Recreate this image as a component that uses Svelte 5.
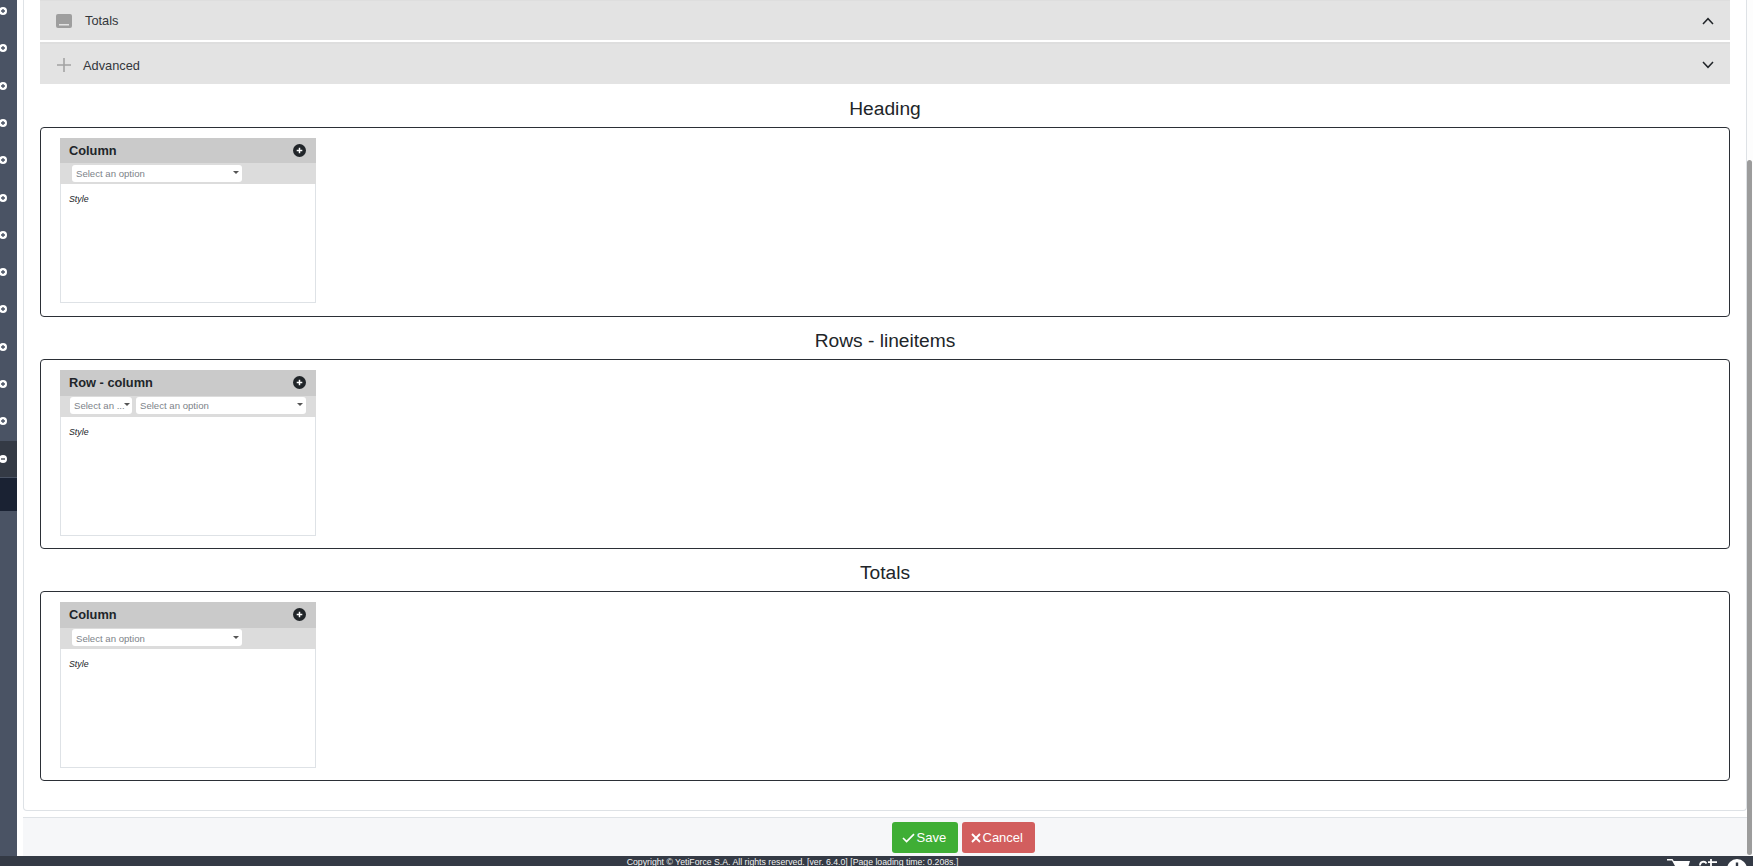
<script lang="ts">
  const sections = [
    { title: 'Heading', head: 'Column', double: false },
    { title: 'Rows - lineitems', head: 'Row - column', double: true },
    { title: 'Totals', head: 'Column', double: false }
  ]
  // menu rows down the left edge, the last plain one is the open item
  const menuItems = Array.from({ length: 12 }, (_, i) => i)
</script>

<div class="page">
  <div class="body">
    <nav class="sidebar">
      {#each menuItems as item (item)}
        <div class="menu-item">
          <svg width="8" height="8" viewBox="0 0 8 8">
            <circle cx="4" cy="4" r="4" fill="#fff" />
            <path d="M4 2v4M2 4h4" stroke="#4a5364" stroke-width="1.3" />
          </svg>
        </div>
      {/each}
      <div class="menu-item open">
        <svg width="8" height="8" viewBox="0 0 8 8">
          <circle cx="4" cy="4" r="4" fill="#fff" />
          <path d="M2 4h4" stroke="#343a45" stroke-width="1.3" />
        </svg>
      </div>
      <div class="menu-active"></div>
    </nav>

    <main class="main">
      <div class="content">
        <div class="card">
          <div class="acc first">
            <svg class="acc-icon" width="16" height="14" viewBox="0 0 16 14">
              <rect width="16" height="14" rx="2" fill="#9e9e9e" />
              <rect x="3" y="10" width="10" height="1.5" fill="#e3e3e3" />
            </svg>
            <span class="acc-label">Totals</span>
            <svg class="chev" width="12" height="8" viewBox="0 0 12 8">
              <path d="M1 7l5-5.3L11 7" fill="none" stroke="#212529" stroke-width="1.5" />
            </svg>
          </div>
          <div class="acc second">
            <svg class="acc-plus" width="14" height="14" viewBox="0 0 14 14">
              <path d="M7 0v14M0 7h14" stroke="#a3a3a3" stroke-width="1.6" />
            </svg>
            <span class="acc-label">Advanced</span>
            <svg class="chev" width="12" height="8" viewBox="0 0 12 8">
              <path d="M1 1l5 5.3L11 1" fill="none" stroke="#212529" stroke-width="1.5" />
            </svg>
          </div>

          {#each sections as section (section.title)}
            <h4 class="title">{section.title}</h4>
            <div class="box">
              <div class="col">
                <div class="col-head">
                  <span>{section.head}</span>
                  <svg width="13" height="13" viewBox="0 0 13 13">
                    <circle cx="6.5" cy="6.5" r="6.5" fill="#212529" />
                    <path d="M6.5 3.7v5.6M3.7 6.5h5.6" stroke="#fff" stroke-width="1.5" />
                  </svg>
                </div>
                <div class="col-selects" class:double={section.double}>
                  {#if section.double}
                    <div class="select short"><span>Select an ...</span><i></i></div>
                    <div class="select grow"><span>Select an option</span><i></i></div>
                  {:else}
                    <div class="select single"><span>Select an option</span><i></i></div>
                  {/if}
                </div>
                <div class="col-body"><em>Style</em></div>
              </div>
            </div>
          {/each}
        </div>
      </div>
      <div class="actions">
        <button class="btn save">
          <svg width="13" height="10" viewBox="0 0 13 10">
            <path d="M1 5l3.6 3.6L12 1.2" fill="none" stroke="#fff" stroke-width="1.7" />
          </svg>
          Save
        </button>
        <button class="btn cancel">
          <svg width="10" height="10" viewBox="0 0 10 10">
            <path d="M1 1l8 8M9 1l-8 8" fill="none" stroke="#fff" stroke-width="1.9" />
          </svg>
          Cancel
        </button>
      </div>
    </main>
    <div class="scrollbar"><div class="thumb"></div></div>
  </div>

  <footer class="footer">
    <span class="copy">Copyright © YetiForce S.A. All rights reserved. [ver. 6.4.0] [Page loading time: 0.208s.]</span>
    <div class="foot-icons">
      <svg width="23" height="7" viewBox="0 0 23 7">
        <path d="M0 0h5.5l1.2 2H23l-1.5 5H8L5 1.4H0z" fill="#fff" />
      </svg>
      <svg width="19" height="7" viewBox="0 0 19 7">
        <path d="M1 6.5a3.5 3.5 0 0 1 6.5-2M12 0v7M9 3.2h9" fill="none" stroke="#fff" stroke-width="1.8" />
      </svg>
      <svg width="20" height="7" viewBox="0 0 20 7">
        <circle cx="10" cy="10" r="10" fill="#fff" />
        <rect x="8.8" y="3.5" width="2.4" height="3.5" fill="#343a45" />
      </svg>
    </div>
  </footer>
</div>

<style>
  :global(body) {
    margin: 0;
    background: #fff;
    overflow: hidden;
  }
  .page {
    height: 866px;
    display: flex;
    flex-direction: column;
    font-family: "Liberation Sans", Arial, sans-serif;
    color: #212529;
  }
  .body {
    flex: 1;
    min-height: 0;
    display: flex;
  }
  .sidebar {
    width: 17px;
    flex: none;
    background: #4a5364;
    overflow: hidden;
  }
  .menu-item {
    height: 37.3px;
    display: flex;
    align-items: center;
    margin-left: -1px;
  }
  .menu-item:first-child {
    margin-top: -7.6px;
  }
  .menu-item svg {
    display: block;
  }
  .menu-item.open {
    background: #343a45;
    margin-left: 0;
    height: 36px;
    margin-top: 1px;
  }
  .menu-item.open svg {
    margin-left: -1px;
  }
  .menu-active {
    height: 33px;
    margin-top: 1px;
    background: #1a2233;
  }
  .main {
    flex: 1;
    min-width: 0;
    display: flex;
    flex-direction: column;
    padding-left: 6px;
  }
  .content {
    flex: 1;
    min-height: 0;
  }
  .card {
    box-sizing: border-box;
    height: 811px;
    border: 1px solid #dee2e6;
    border-top: 0;
    border-radius: 0 0 4px 4px;
    padding: 0 16px 0 16px;
  }
  .acc {
    background: #e3e3e3;
    display: flex;
    align-items: center;
    box-sizing: border-box;
    font-size: 12.8px;
  }
  .acc.first {
    height: 40px;
    margin-bottom: 2px;
    border-top: 1px solid #dedede;
  }
  .acc.second {
    height: 42px;
    margin-bottom: 0.6px;
    border-top: 2px solid #dedede;
    padding-top: 2px;
  }
  .acc-icon {
    margin-left: 16px;
  }
  .acc-plus {
    margin-left: 17px;
  }
  .acc-label {
    margin-left: 13px;
    flex: 1;
    color: #33373b;
  }
  .acc.second .acc-label {
    margin-left: 12px;
  }
  .chev {
    margin-right: 16px;
  }
  .title {
    margin: 0;
    height: 42.4px;
    line-height: 20px;
    padding-top: 14.5px;
    box-sizing: border-box;
    text-align: center;
    font-size: 19.2px;
    font-weight: 400;
  }
  .box {
    box-sizing: border-box;
    height: 189.8px;
    border: 1px solid #2b2f36;
    border-radius: 4px;
    padding: 10px 19px;
  }
  .col {
    width: 256px;
    height: 165.4px;
    box-sizing: border-box;
    display: flex;
    flex-direction: column;
  }
  .col-head {
    height: 25.4px;
    flex: none;
    box-sizing: border-box;
    background: #cacaca;
    display: flex;
    align-items: center;
    justify-content: space-between;
    padding: 0 10px 1px 9px;
    font-size: 12.8px;
    font-weight: 700;
  }
  .col-head svg {
    display: block;
  }
  .col-selects {
    height: 21px;
    flex: none;
    box-sizing: border-box;
    background: #dcdcdc;
    display: flex;
    align-items: flex-start;
    padding: 1.5px 0 0 12px;
    gap: 4px;
  }
  .col-selects.double {
    padding: 1.5px 10px 0;
  }
  .select {
    box-sizing: border-box;
    height: 16.7px;
    background: #fff;
    border-radius: 3px;
    display: flex;
    align-items: center;
    padding: 1px 3px 0 4px;
    font-size: 9.6px;
    color: #7d8389;
  }
  .select span {
    flex: 1;
    white-space: nowrap;
  }
  .select i {
    flex: none;
    width: 0;
    height: 0;
    margin-top: -2px;
    border-left: 3px solid transparent;
    border-right: 3px solid transparent;
    border-top: 3px solid #555;
  }
  .select.single {
    width: 170px;
  }
  .select.short {
    width: 62px;
    padding-right: 2px;
  }
  .select.short i {
    margin-left: -1px;
  }
  .select.grow {
    flex: 1;
  }
  .col-body {
    flex: 1;
    border: 1px solid #dee2e6;
    border-top: 0;
    padding: 9px 8px;
    font-size: 8.8px;
    line-height: 12px;
  }
  .actions {
    height: 39px;
    flex: none;
    box-sizing: border-box;
    border-top: 1px solid #dee2e6;
    background: #f6f7f9;
    display: flex;
    justify-content: center;
    align-items: flex-start;
    padding: 4px 0 0 156px;
    gap: 4px;
    margin-top: 6px;
  }
  .btn {
    height: 31px;
    border: 0;
    border-radius: 3px;
    color: #fff;
    font-family: inherit;
    font-size: 13px;
    display: flex;
    align-items: center;
    gap: 2px;
  }
  .btn.save {
    background: #3fae35;
    width: 66px;
    padding: 0 0 0 10px;
  }
  .btn.cancel {
    background: #d25e5e;
    width: 73px;
    padding: 0 0 0 9px;
  }
  .scrollbar {
    width: 6px;
    flex: none;
    position: relative;
    background: #fdfdfd;
  }
  .thumb {
    position: absolute;
    top: 160px;
    bottom: 1px;
    left: 0;
    right: 1px;
    border-radius: 3px;
    background: #9c9c9c;
  }
  .footer {
    height: 10px;
    flex: none;
    background: #343a45;
    position: relative;
    overflow: hidden;
    color: #f2f2f2;
    font-size: 8.72px;
    line-height: 13px;
    text-align: center;
    padding-right: 168px;
  }
  .copy {
    display: block;
  }
  .foot-icons {
    position: absolute;
    top: 3px;
    right: 6px;
    display: flex;
    gap: 9px;
  }
  .foot-icons svg {
    display: block;
  }
</style>
